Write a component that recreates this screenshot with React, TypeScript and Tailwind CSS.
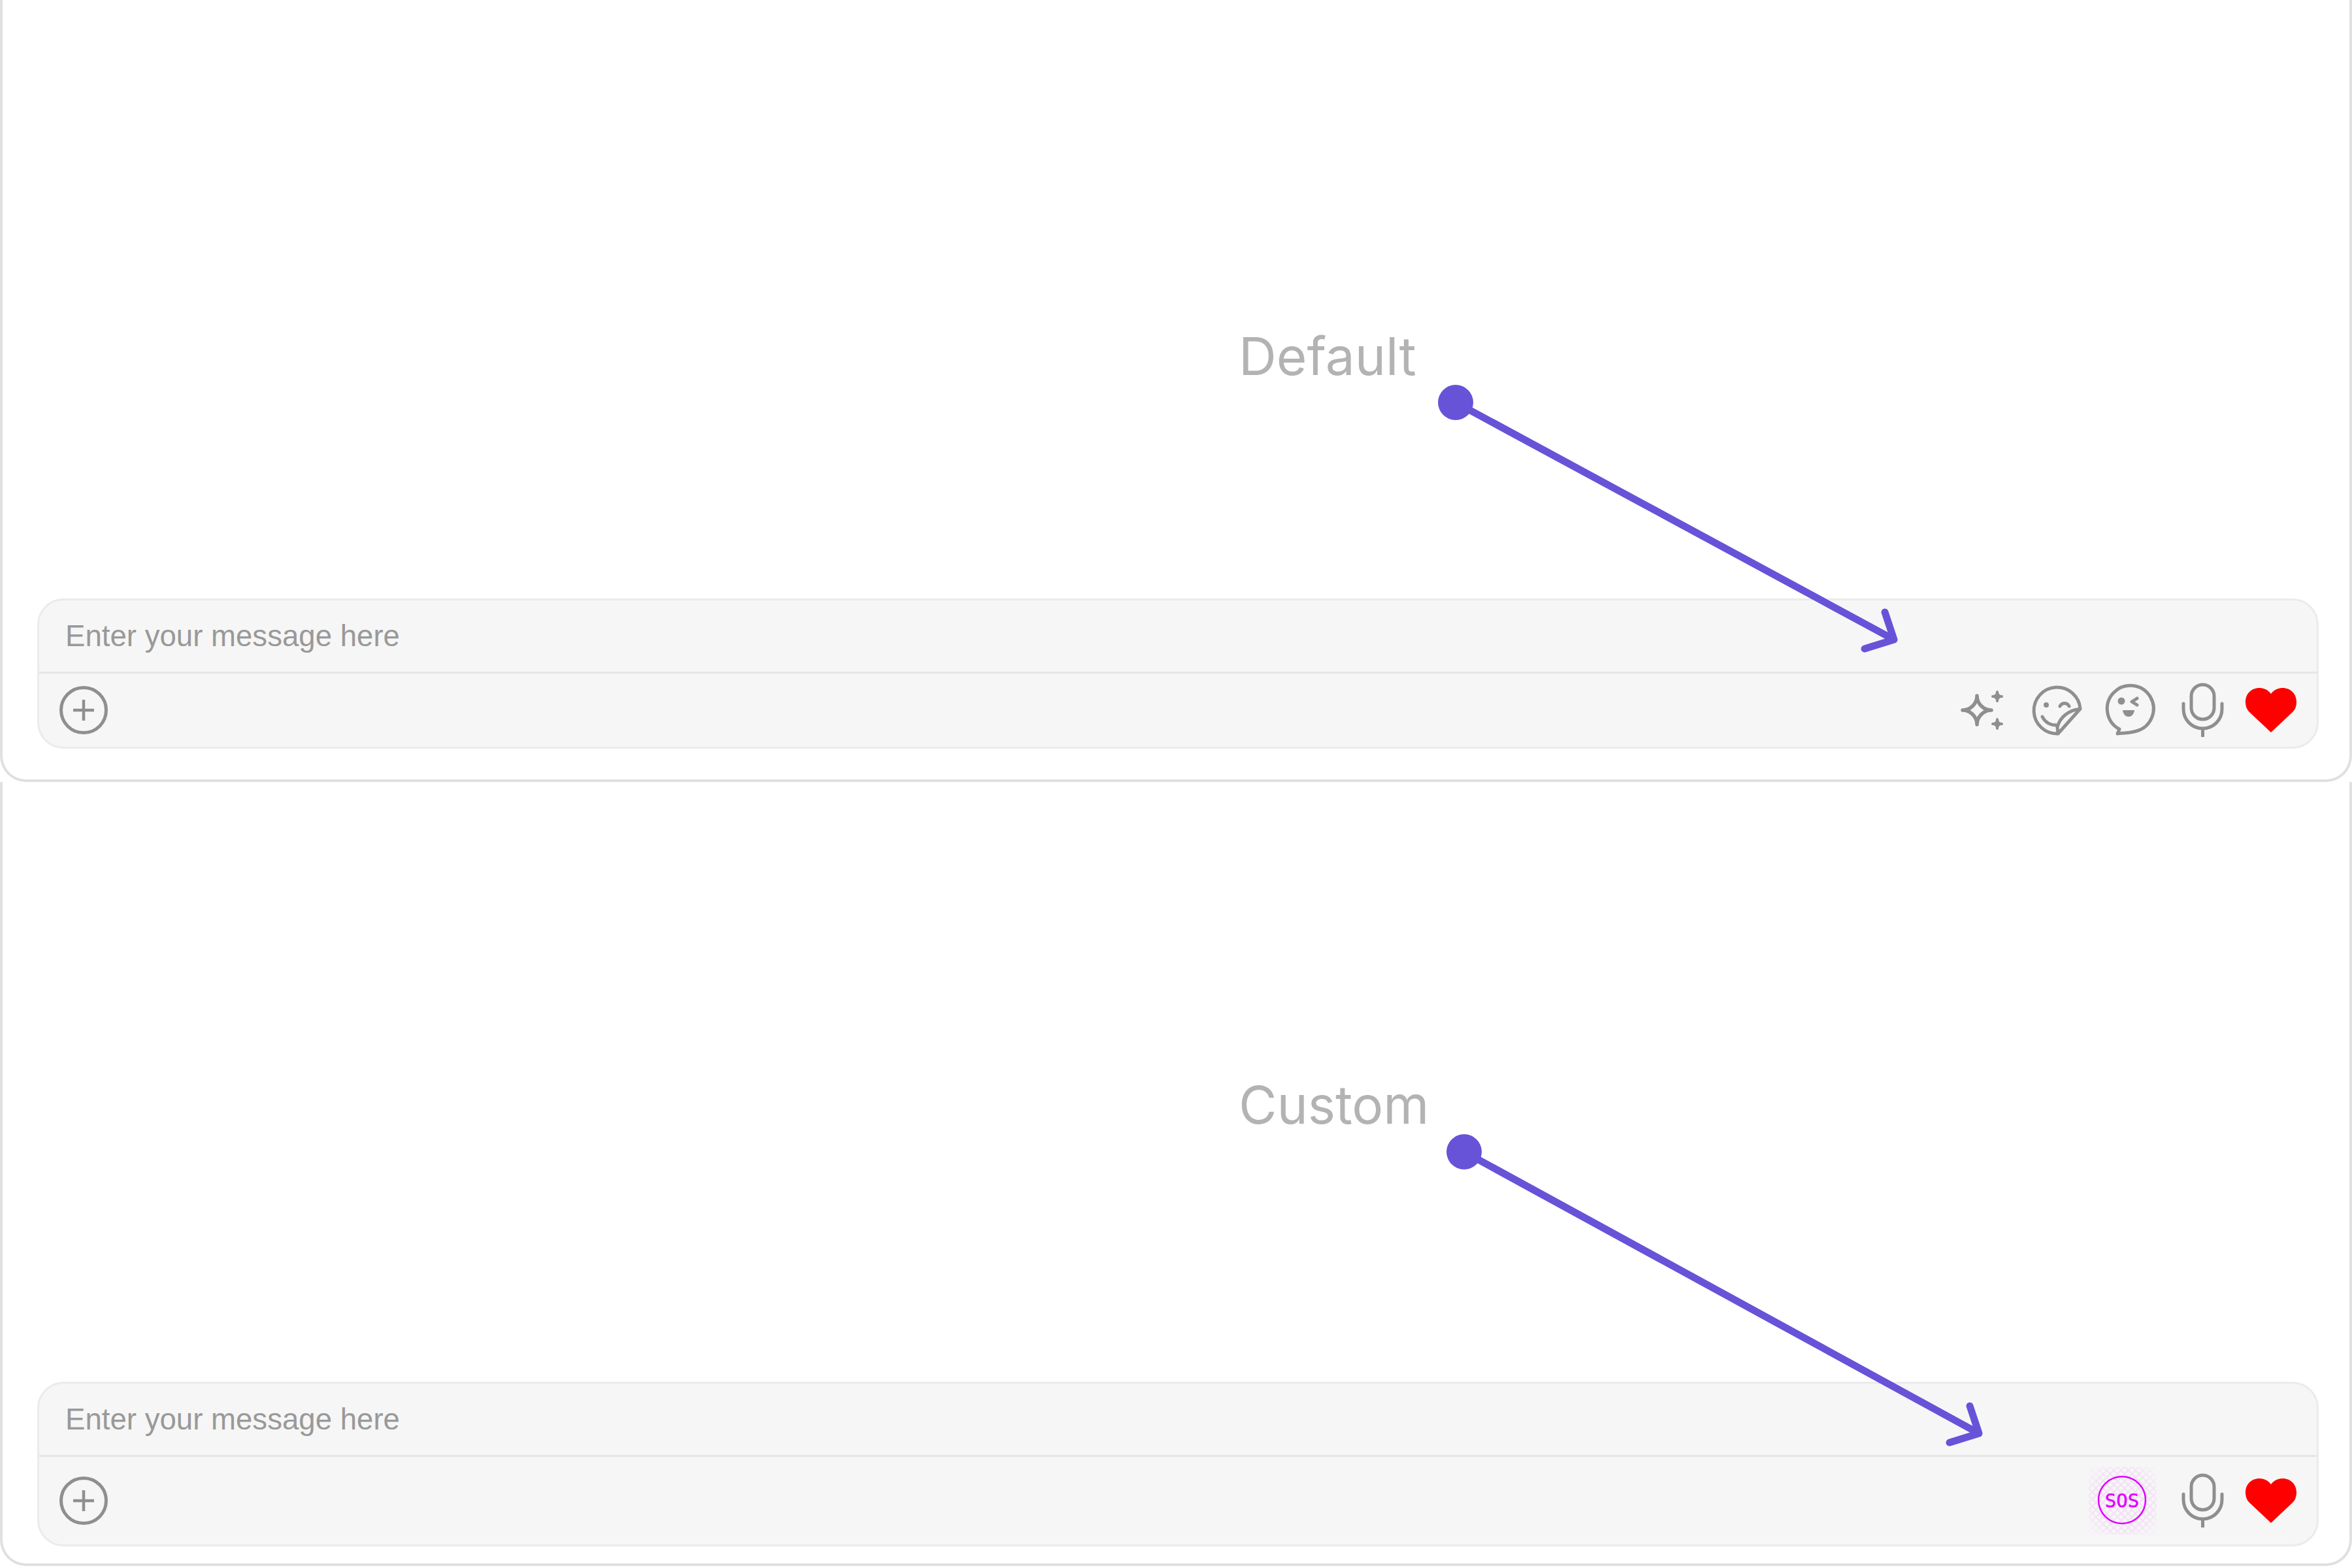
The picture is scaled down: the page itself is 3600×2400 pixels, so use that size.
const G = "#8f8f8f";

function Plus() {
  return (
    <svg viewBox="0 0 96 96" className="w-24 h-24 shrink-0" fill="none" stroke={G}>
      <circle cx="48" cy="48" r="34.5" strokeWidth="5" />
      <path d="M32 48H64M48 32V64" strokeWidth="4.5" />
    </svg>
  );
}
function Sparkle() {
  return (
    <svg viewBox="0 0 96 96" className="w-24 h-24 shrink-0" fill="none" stroke={G} strokeWidth="5.5" strokeLinejoin="round">
      <path d="M39 26C39 38 49 48 61 48C49 48 39 58 39 70C39 58 29 48 17 48C29 48 39 38 39 26Z" />
      <path d="M70 20C70 24 73 27 77 27C73 27 70 30 70 34C70 30 67 27 63 27C67 27 70 24 70 20Z" fill={G} strokeWidth="4" />
      <path d="M70 62C70 66 73 69 77 69C73 69 70 72 70 76C70 72 67 69 63 69C67 69 70 66 70 62Z" fill={G} strokeWidth="4" />
    </svg>
  );
}
function Sticker() {
  return (
    <svg viewBox="0 0 96 96" className="w-24 h-24 shrink-0" fill="none" stroke={G} strokeWidth="5" strokeLinecap="round" strokeLinejoin="round">
      <path d="M85 46A35.5 35.5 0 1 0 51 84L85 46C68 48 54 58 50 74L51 84" />
      <circle cx="33" cy="40" r="4" fill={G} stroke="none" />
      <path d="M54 42C57 36 65 36 68 42" />
      <path d="M27 58C31 66 39 71 49 71" />
    </svg>
  );
}
function Wink() {
  return (
    <svg viewBox="0 0 96 96" className="w-24 h-24 shrink-0 translate-x-[3px]" fill="none" stroke={G} strokeWidth="5" strokeLinecap="round" strokeLinejoin="round">
      <path d="M27 84L30 77A35.5 35.5 0 1 1 56 80C46 83 36 83 27 84Z" />
      <circle cx="33" cy="34" r="5.5" fill={G} stroke="none" />
      <path d="M57 30L49 35L57 40" />
      <path d="M35 48H53C52 55 48 58 44 58C40 58 36 55 35 48Z" fill={G} stroke="none" />
    </svg>
  );
}
function Mic() {
  return (
    <svg viewBox="0 0 96 96" className="w-24 h-24 shrink-0" fill="none" stroke={G} strokeWidth="5">
      <rect x="31" y="9" width="35" height="53" rx="17.5" />
      <path d="M19 38V46C19 63 32 76 48.5 76C65 76 78 63 78 46V38" strokeLinecap="round" />
      <path d="M48.5 76V89" />
    </svg>
  );
}
function Heart() {
  return (
    <svg viewBox="0 0 96 96" className="w-24 h-24 shrink-0 -ml-[7px]" fill="#ff0000">
      <path d="M48 23C43 16 36 14 30 14C18 14 9 23 9 35C9 42 11 47 15 51L48 82L81 51C85 47 87 42 87 35C87 23 78 14 66 14C60 14 53 16 48 23Z" />
    </svg>
  );
}
function Sos() {
  return (
    <svg viewBox="0 0 104 104" className="w-[104px] h-[104px] shrink-0 mr-[6px]" fill="none">
      <defs>
        <pattern id="hatch" width="11" height="11" patternUnits="userSpaceOnUse">
          <path d="M0 0L11 11M11 0L0 11" stroke="#e000ff" strokeWidth="2" />
        </pattern>
        <radialGradient id="fade" cx="50%" cy="50%" r="62%">
          <stop offset="0%" stopColor="#fff" stopOpacity="0.1" />
          <stop offset="75%" stopColor="#fff" stopOpacity="0.08" />
          <stop offset="100%" stopColor="#fff" stopOpacity="0.02" />
        </radialGradient>
        <mask id="hatchMask">
          <rect width="104" height="104" fill="url(#fade)" />
        </mask>
      </defs>
      <rect width="104" height="104" fill="url(#hatch)" mask="url(#hatchMask)" />
      <circle cx="51" cy="51" r="36" stroke="#df00ff" strokeWidth="2.5" />
      <text x="51" y="62" textAnchor="middle" fill="#df00ff" stroke="#df00ff" strokeWidth="0.5" fontFamily="'DejaVu Sans Mono', monospace" fontSize="29">SOS</text>
    </svg>
  );
}

function Composer({ custom }: { custom?: boolean }) {
  return (
    <div className="ml-[53px] mr-[47px] rounded-[40px] border-[3px] border-[#ebebeb] bg-[#f6f6f6]">
      <div className="h-[112px] flex items-center pl-[40px] pt-[2px] border-b-[3px] border-[#e6e6e6] font-['Liberation_Sans',sans-serif] text-[45.6px] text-[#999999]">
        Enter your message here
      </div>
      <div className={`flex items-center justify-between pl-5 pr-[22px] ${custom ? "h-[134px]" : "h-[112px]"}`}>
        <Plus />
        <div className="flex items-center gap-4">
          {custom ? <Sos /> : (
            <>
              <Sparkle />
              <Sticker />
              <Wink />
            </>
          )}
          <Mic />
          <Heart />
        </div>
      </div>
    </div>
  );
}

function Arrow({ dx, dy, tx, ty }: { dx: number; dy: number; tx: number; ty: number }) {
  return (
    <svg className="absolute left-0 top-0 w-[3600px] h-[2400px] pointer-events-none" viewBox="0 0 3600 2400" fill="none">
      <circle cx={dx} cy={dy} r="27" fill="#6753d8" />
      <path d={`M${dx} ${dy}L${tx} ${ty}M${tx - 14} ${ty - 42}L${tx} ${ty}L${tx - 45} ${ty + 14}`} stroke="#6753d8" strokeWidth="11" strokeLinecap="round" strokeLinejoin="round" />
    </svg>
  );
}

export default function App() {
  return (
    <div className="relative w-[3600px] h-[2400px] bg-white overflow-hidden font-['Inter',sans-serif]">
      <div className="h-[1197px] flex flex-col justify-end pb-[47px] border-x-[4px] border-b-[4px] border-[#e0e0e0] rounded-b-[40px]">
        <div className="mb-auto mt-[497px] ml-[1892px] text-[80px] leading-[96px] font-normal text-[#b3b3b3]">Default</div>
        <Composer />
      </div>
      <div className="h-[1200px] flex flex-col justify-end pb-[26px] border-x-[4px] border-b-[4px] border-[#e0e0e0] rounded-b-[40px]">
        <div className="mb-auto mt-[446px] ml-[1892px] text-[80px] leading-[96px] font-normal text-[#b3b3b3]">Custom</div>
        <Composer custom />
      </div>
      <Arrow dx={2228} dy={616} tx={2899} ty={979} />
      <Arrow dx={2241} dy={1763} tx={3029} ty={2194} />
    </div>
  );
}
